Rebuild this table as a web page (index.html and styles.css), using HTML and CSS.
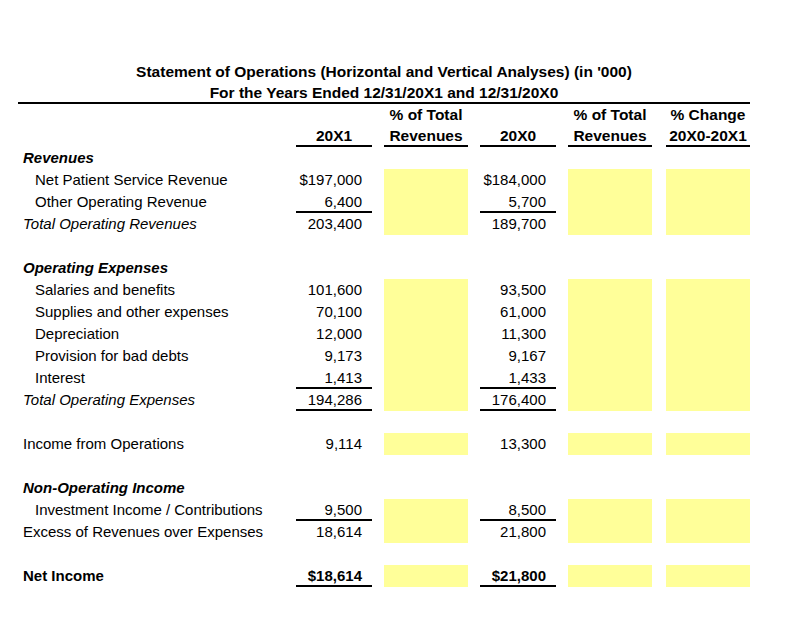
FILE: index.html
```html
<!DOCTYPE html>
<html lang="en">
<head>
<meta charset="utf-8">
<title>Statement of Operations</title>
<link rel="stylesheet" href="styles.css">
</head>
<body>
<div class="sheet">
  <div class="title">Statement of Operations (Horizontal and Vertical Analyses) (in '000)</div>
  <div class="title">For the Years Ended 12/31/20X1 and 12/31/20X0</div>
  <div class="rule"></div>

  <div class="row head1">
    <span></span><span></span><span class="hd">% of Total</span><span></span><span class="hd">% of Total</span><span class="hd chg">% Change</span>
  </div>
  <div class="row head2">
    <span></span><span class="hd ul">20X1</span><span class="hd ul">Revenues</span><span class="hd ul">20X0</span><span class="hd ul">Revenues</span><span class="hd ul chg">20X0-20X1</span>
  </div>

  <div class="row"><span class="lbl sec">Revenues</span><span></span><span></span><span></span><span></span><span class="chg"></span></div>
  <div class="row"><span class="lbl ind">Net Patient Service Revenue</span><span class="num">$197,000</span><span class="y"></span><span class="num">$184,000</span><span class="y"></span><span class="y chg"></span></div>
  <div class="row"><span class="lbl ind">Other Operating Revenue</span><span class="num ul">6,400</span><span class="y"></span><span class="num ul">5,700</span><span class="y"></span><span class="y chg"></span></div>
  <div class="row"><span class="lbl it">Total Operating Revenues</span><span class="num">203,400</span><span class="y"></span><span class="num">189,700</span><span class="y"></span><span class="y chg"></span></div>
  <div class="row"><span class="lbl"></span><span></span><span></span><span></span><span></span><span class="chg"></span></div>

  <div class="row"><span class="lbl sec">Operating Expenses</span><span></span><span></span><span></span><span></span><span class="chg"></span></div>
  <div class="row"><span class="lbl ind">Salaries and benefits</span><span class="num">101,600</span><span class="y"></span><span class="num">93,500</span><span class="y"></span><span class="y chg"></span></div>
  <div class="row"><span class="lbl ind">Supplies and other expenses</span><span class="num">70,100</span><span class="y"></span><span class="num">61,000</span><span class="y"></span><span class="y chg"></span></div>
  <div class="row"><span class="lbl ind">Depreciation</span><span class="num">12,000</span><span class="y"></span><span class="num">11,300</span><span class="y"></span><span class="y chg"></span></div>
  <div class="row"><span class="lbl ind">Provision for bad debts</span><span class="num">9,173</span><span class="y"></span><span class="num">9,167</span><span class="y"></span><span class="y chg"></span></div>
  <div class="row"><span class="lbl ind">Interest</span><span class="num ul">1,413</span><span class="y"></span><span class="num ul">1,433</span><span class="y"></span><span class="y chg"></span></div>
  <div class="row"><span class="lbl it">Total Operating Expenses</span><span class="num ul">194,286</span><span class="y"></span><span class="num ul">176,400</span><span class="y"></span><span class="y chg"></span></div>
  <div class="row"><span class="lbl"></span><span></span><span></span><span></span><span></span><span class="chg"></span></div>

  <div class="row"><span class="lbl">Income from Operations</span><span class="num">9,114</span><span class="y"></span><span class="num">13,300</span><span class="y"></span><span class="y chg"></span></div>
  <div class="row"><span class="lbl"></span><span></span><span></span><span></span><span></span><span class="chg"></span></div>

  <div class="row"><span class="lbl sec">Non-Operating Income</span><span></span><span></span><span></span><span></span><span class="chg"></span></div>
  <div class="row"><span class="lbl ind">Investment Income / Contributions</span><span class="num ul">9,500</span><span class="y"></span><span class="num ul">8,500</span><span class="y"></span><span class="y chg"></span></div>
  <div class="row"><span class="lbl">Excess of Revenues over Expenses</span><span class="num">18,614</span><span class="y"></span><span class="num">21,800</span><span class="y"></span><span class="y chg"></span></div>
  <div class="row"><span class="lbl"></span><span></span><span></span><span></span><span></span><span class="chg"></span></div>

  <div class="row"><span class="lbl bold">Net Income</span><span class="num bold dbl">$18,614</span><span class="y"></span><span class="num bold dbl">$21,800</span><span class="y"></span><span class="y chg"></span></div>
</div>
</body>
</html>
```

FILE: styles.css
```css
html, body {
  margin: 0;
  padding: 0;
  background: #ffffff;
}

body {
  font-family: "Liberation Sans", Arial, sans-serif;
  font-size: 15px;
  color: #000000;
}

.sheet {
  width: 732px;
  margin-left: 18px;
  padding-top: 61px;
}

.title {
  font-weight: bold;
  font-size: 15.5px;
  text-align: center;
  line-height: 21px;
  white-space: nowrap;
}

.rule {
  height: 2px;
  background: #000000;
  margin-top: -1px;
}

.row {
  display: grid;
  grid-template-columns: 266px 76px 84px 76px 84px 84px;
  column-gap: 12px;
  height: 22px;
  line-height: 22px;
  white-space: nowrap;
}

.row > .chg {
  margin-left: 2px;
  margin-right: -2px;
}

.head2 {
  height: 21px;
  line-height: 20px;
}

.hd {
  font-weight: bold;
  font-size: 15.5px;
  text-align: center;
}

.lbl {
  padding-left: 5px;
}

.ind {
  padding-left: 17px;
}

.sec {
  font-weight: bold;
  font-style: italic;
}

.it {
  font-style: italic;
}

.bold {
  font-weight: bold;
}

.num {
  text-align: right;
  padding-right: 10px;
}

.y {
  background: #ffff99;
}

.ul {
  box-shadow: inset 0 -2px 0 #000000;
}

.dbl {
  box-shadow: inset 0 -2px 0 #000000, 0 1px 0 #ffffff, 0 3px 0 #000000;
}
```
